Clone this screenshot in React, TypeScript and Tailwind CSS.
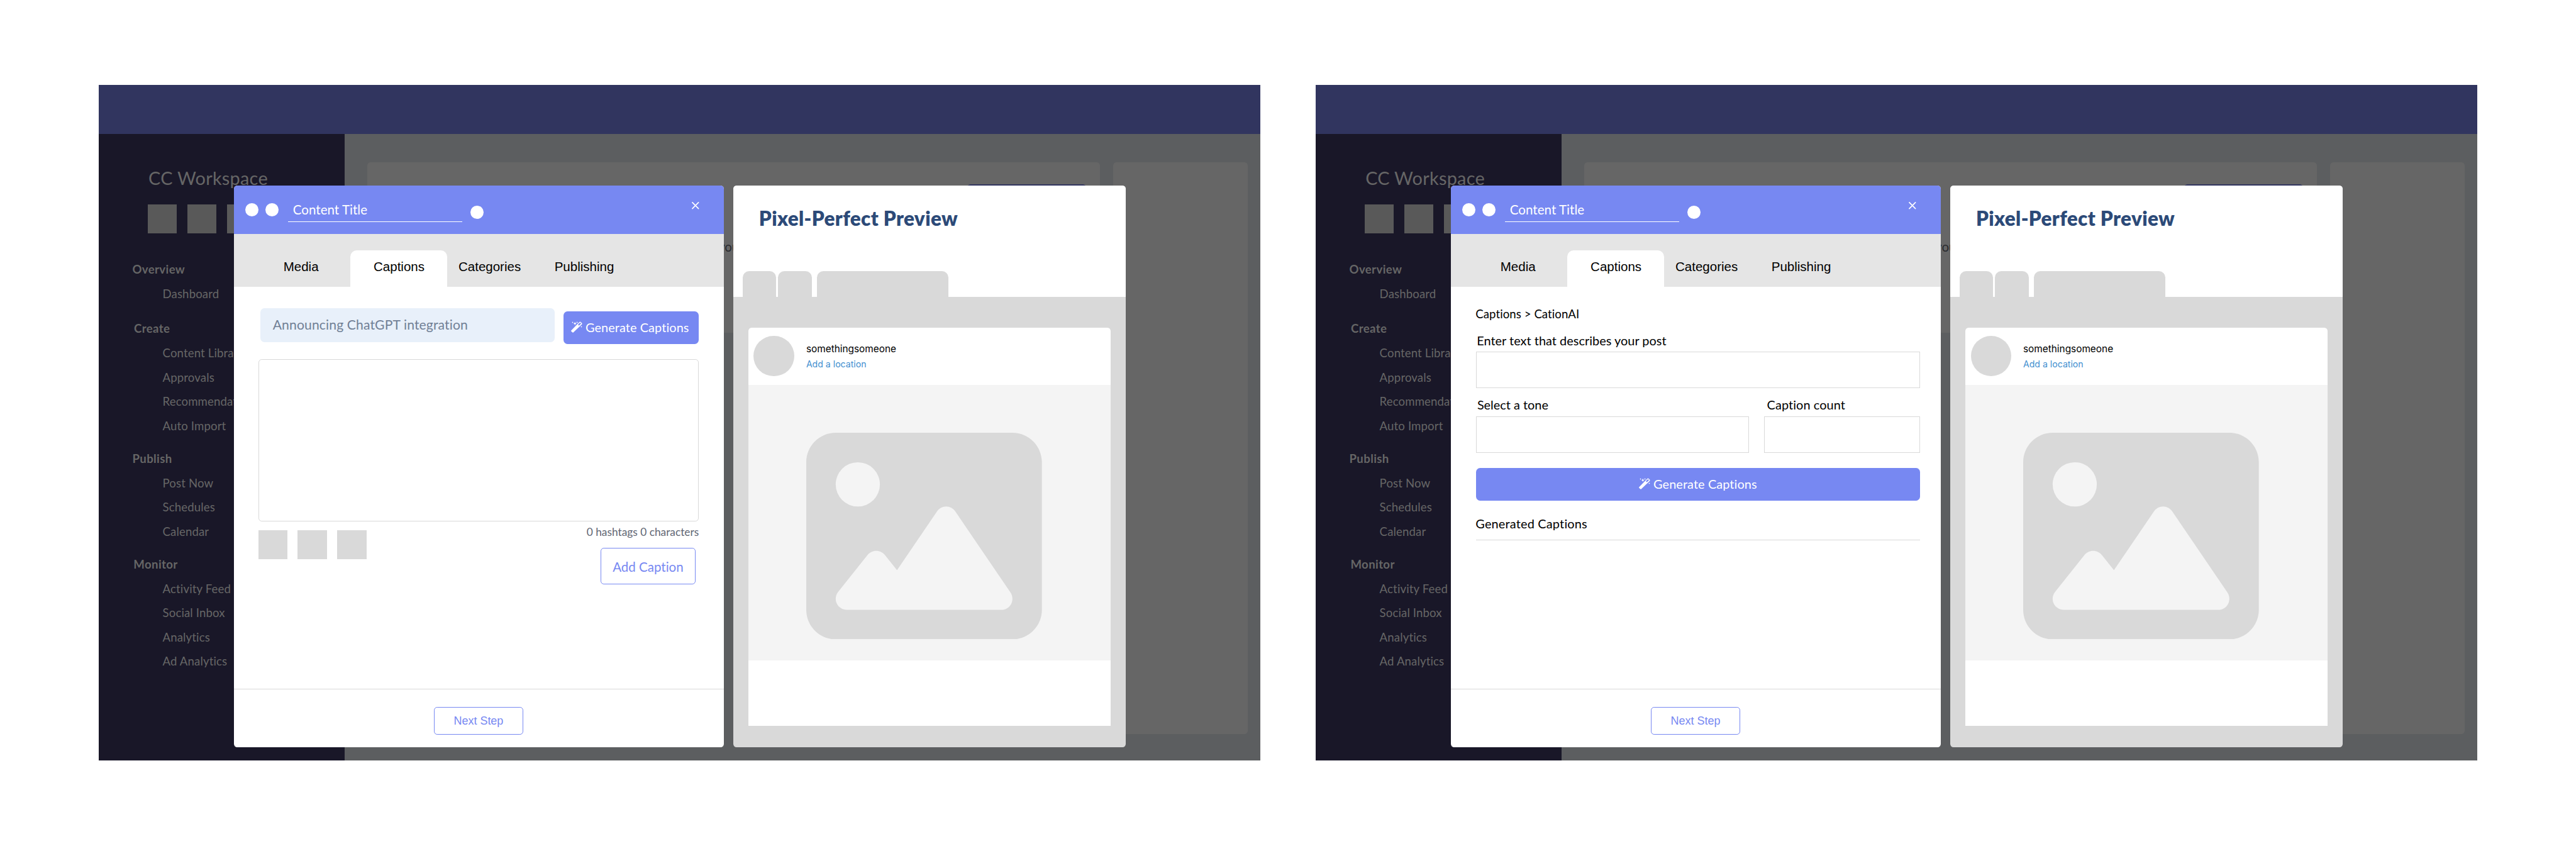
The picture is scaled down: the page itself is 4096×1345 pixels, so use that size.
import type { ReactNode } from "react";

type NavGroup = { title: string; items: string[]; className: string };

const NAV: NavGroup[] = [
  { title: "Overview", items: ["Dashboard"], className: "mt-[69px] pl-[84px]" },
  {
    title: "Create",
    items: ["Content Library", "Approvals", "Recommendations", "Auto Import"],
    className: "mt-[36px] pl-[88px]",
  },
  { title: "Publish", items: ["Post Now", "Schedules", "Calendar"], className: "mt-[32px] pl-[84px]" },
  {
    title: "Monitor",
    items: ["Activity Feed", "Social Inbox", "Analytics", "Ad Analytics"],
    className: "mt-[32px] pl-[87px]",
  },
];

function WandIcon() {
  return (
    <svg viewBox="36 30 84 84" className="h-[28px] w-[28px] shrink-0" fill="currentColor">
      <path
        fillRule="evenodd"
        d="M37 98 98 35Q102 31 107 34L116 42Q120 47 116 52L53 112Q50 114.500 47 112L37.500 104Q35 101 37 98ZM89 52Q87.500 54 89.500 56L93 60Q95 61 97 59L109 48Q111 46 109 43L106 40Q103 38 101 40Z"
      />
      <path d="M65 34Q66.500 44.500 76 46Q66.500 47.500 65 58Q63.500 47.500 54 46Q63.500 44.500 65 34Z" />
      <path d="M48 31.500Q49 36 54 37.500Q49 39 48 43.500Q47 39 42 37.500Q47 36 48 31.500Z" />
      <path d="M81 31.500Q82 36 87 37.500Q82 39 81 43.500Q80 39 75 37.500Q80 36 81 31.500Z" />
      <path d="M113 64Q114 68.500 119 70Q114 71.500 113 76Q112 71.500 107 70Q112 68.500 113 64Z" />
    </svg>
  );
}

function CloseIcon() {
  return (
    <svg viewBox="0 0 18 18" className="h-[18px] w-[18px] shrink-0" fill="none" stroke="currentColor" strokeWidth="2.6" strokeLinecap="round">
      <path d="M1.500 1.500 16.500 16.500M16.500 1.500 1.500 16.500" />
    </svg>
  );
}

function ImageIcon() {
  return (
    <svg viewBox="0 32 512 448" preserveAspectRatio="none" className="h-[512px] w-[584px]" fill="#d9d9d9">
      <path d="M0 96C0 60.700 28.700 32 64 32H448c35.300 0 64 28.700 64 64V416c0 35.300-28.700 64-64 64H64c-35.300 0-64-28.700-64-64V96zM323.800 202.500c-4.500-6.600-11.900-10.500-19.800-10.500s-15.400 3.900-19.800 10.500l-87 127.600L170.700 297c-4.600-5.700-11.500-9-18.700-9s-14.200 3.300-18.700 9l-64 80c-5.800 7.200-6.900 17.100-2.900 25.400s12.400 13.600 21.600 13.600h96 32H424c8.900 0 17.100-4.900 21.200-12.800s3.600-17.400-1.400-24.700l-120-176zM112 192a48 48 0 1 0 0-96 48 48 0 1 0 0 96z" />
    </svg>
  );
}

function Sidebar() {
  return (
    <nav className="w-[610px] shrink-0 bg-[#191728] pt-[79px] text-[#666666]">
      <div className="pl-[124px] text-[45px] leading-[60px] tracking-[0.4px]">CC Workspace</div>
      <div className="mt-[35px] flex gap-[26px] pl-[122px]">
        <div className="size-[72px] bg-[#595959]" />
        <div className="size-[72px] bg-[#595959]" />
        <div className="size-[72px] bg-[#595959]" />
      </div>
      <div className="pt-[2px]">
        {NAV.map((group) => (
          <section key={group.title}>
            <h3 className={`${group.className} text-[29px] leading-[40px] font-bold tracking-[0.6px]`}>{group.title}</h3>
            <ul className="mt-[10px] pl-[159px] text-[29px] leading-[60px] tracking-[0.2px]">
              {group.items.map((item) => (
                <li key={item}>{item}</li>
              ))}
            </ul>
          </section>
        ))}
      </div>
    </nav>
  );
}

function Workspace() {
  return (
    <main className="flex flex-1 items-start gap-[32px] bg-[#5c5e60] pt-[70px] pr-[32px] pl-[56px]">
      <div className="h-[422px] w-[1816px] rounded-[8px] bg-[#666666] pt-[55px]">
        <div className="mr-[35px] ml-auto h-[76px] w-[294px] rounded-[8px] bg-[#31355f]" />
        <div className="mt-[59px] pl-[870px] text-[32px] leading-[40px] text-[#2a2b2f]">you</div>
      </div>
      <div className="h-[1417px] flex-1 rounded-[8px] bg-[#666666]" />
    </main>
  );
}

function EditorHeader() {
  return (
    <header className="flex h-[120px] shrink-0 items-start bg-[#7788f2] pl-[28px] text-white">
      <div className="mt-[44px] size-[32px] rounded-full bg-white" />
      <div className="mt-[44px] ml-[18px] size-[32px] rounded-full bg-white" />
      <div className="mt-[28px] ml-[24px] h-[62px] w-[432px] border-b-2 border-white pl-[12px] text-[32px] leading-[64px] tracking-[0.05px]">
        Content Title
      </div>
      <div className="mt-[50px] ml-[20px] size-[32px] rounded-full bg-white" />
      <div className="mt-[41px] ml-[517px]">
        <CloseIcon />
      </div>
    </header>
  );
}

function EditorTabs() {
  const tab = "flex h-[90px] items-center justify-center pb-[8px]";
  return (
    <div className="flex h-[130px] shrink-0 items-end bg-[#e5e5e5] pl-[44px] font-['Liberation_Sans',sans-serif] text-[32px] leading-none text-black">
      <div className={`${tab} w-[244px]`}>Media</div>
      <div className={`${tab} w-[240px] rounded-t-[16px] bg-white pl-[2px]`}>Captions</div>
      <div className={`${tab} w-[211px]`}>Categories</div>
      <div className={`${tab} w-[258px]`}>Publishing</div>
    </div>
  );
}

function Editor({ children }: { children: ReactNode }) {
  return (
    <div className="flex h-[1392px] w-[1214px] flex-col overflow-hidden rounded-[8px] bg-white">
      <EditorHeader />
      <EditorTabs />
      <div className="flex-1">{children}</div>
      <footer className="flex h-[145px] shrink-0 items-start justify-center border-t-2 border-[#d9d9d9] pt-[44px] pr-[2px]">
        <button className="h-[68px] w-[220px] rounded-[8px] border-2 border-[#7788f2] pt-[2px] font-['Liberation_Sans',sans-serif] text-[28px] leading-none text-[#7788f2]">
          Next Step
        </button>
      </footer>
    </div>
  );
}

function CaptionForm() {
  return (
    <div className="pt-[54px] pr-[62px] pl-[60px]">
      <div className="flex items-start pl-[6px]">
        <div className="flex h-[84px] w-[728px] items-center rounded-[10px] bg-[#e8f0fa] pb-px pl-[30px] text-[33px] leading-none tracking-[0.17px] text-[#718096]">
          Announcing ChatGPT integration
        </div>
        <button className="mt-[8px] ml-[22px] flex h-[80px] w-[336px] items-center gap-[8px] rounded-[10px] bg-[#7788f2] pl-[19px] text-[31px] leading-none tracking-[0.15px] text-white">
          <span className="-mt-[3px]">
            <WandIcon />
          </span>
          Generate Captions
        </button>
      </div>
      <div className="mt-[38px] h-[402px] rounded-[8px] border-2 border-[#d9d9d9]" />
      <div className="flex items-start justify-between">
        <div className="mt-[22px] flex gap-[26px]">
          <div className="size-[72px] bg-[#d9d9d9]" />
          <div className="size-[72px] bg-[#d9d9d9]" />
          <div className="size-[72px] bg-[#d9d9d9]" />
        </div>
        <div className="mt-[6px] flex flex-col items-end">
          <div className="text-[27px] leading-[40px] text-[#5f6673]">0 hashtags 0 characters</div>
          <button className="mt-[20px] mr-[8px] h-[90px] w-[236px] rounded-[8px] border-2 border-[#7788f2] pt-[3px] text-[32px] leading-none text-[#7788f2]">
            Add Caption
          </button>
        </div>
      </div>
    </div>
  );
}

function CaptionGenerator() {
  const label = "text-[31px] leading-[40px]";
  return (
    <div className="pt-[49px] pr-[52px] pl-[62px] text-black">
      <div className="-ml-px text-[29px] leading-[40px] tracking-[0.1px]">Captions &gt; CationAI</div>
      <div className={`${label} mt-[26px] ml-[2px] tracking-[0.05px]`}>Enter text that describes your post</div>
      <div className="mt-[7px] h-[90px] border-2 border-[#d9d9d9]" />
      <div className="mt-[22px] flex gap-[38px]">
        <div className="w-[676px]">
          <div className={`${label} ml-[3px]`}>Select a tone</div>
          <div className="mt-[8px] h-[90px] border-2 border-[#d9d9d9]" />
        </div>
        <div className="flex-1">
          <div className={`${label} ml-[7px] tracking-[0.15px]`}>Caption count</div>
          <div className="mt-[8px] h-[90px] border-2 border-[#d9d9d9]" />
        </div>
      </div>
      <button className="mt-[38px] flex h-[80px] w-full items-center justify-center gap-[8px] rounded-[10px] bg-[#7788f2] text-[31px] leading-none tracking-[0.15px] text-white">
        <span className="-mt-[3px]">
          <WandIcon />
        </span>
        Generate Captions
      </button>
      <div className="mt-[38px] border-b-2 border-[#d9d9d9] pb-[20px]">
        <div className={`${label} -ml-px tracking-[0.3px]`}>Generated Captions</div>
      </div>
    </div>
  );
}

function Preview() {
  return (
    <div className="flex h-[1392px] w-[972px] flex-col overflow-hidden rounded-[8px] bg-[#d9d9d9]">
      <div className="flex h-[276px] shrink-0 flex-col justify-between bg-white pt-[51px]">
        <h2 className="pl-[63px] text-[49px] leading-[60px] font-extrabold tracking-[0.6px] text-[#2c4a78]">Pixel-Perfect Preview</h2>
        <div className="flex pl-[22px]">
          <div className="h-[64px] w-[84px] rounded-t-[16px] bg-[#d9d9d9]" />
          <div className="ml-[4px] h-[64px] w-[84px] rounded-t-[16px] bg-[#d9d9d9]" />
          <div className="ml-[12px] h-[64px] w-[326px] rounded-t-[16px] bg-[#d9d9d9]" />
        </div>
      </div>
      <div className="mt-[76px] ml-[36px] h-[986px] w-[898px] rounded-t-[8px] bg-white">
        <div className="flex h-[142px] items-start pl-[14px] font-['Inter',sans-serif]">
          <div className="mt-[20px] size-[100px] rounded-full bg-[#d9d9d9]" />
          <div className="mt-[34px] ml-[30px]">
            <div className="text-[24px] leading-[38px] text-black">somethingsomeone</div>
            <div className="text-[22px] leading-[38px] text-[#4390d0]">Add a location</div>
          </div>
        </div>
        <div className="h-[682px] bg-[#f4f4f4] pt-[118px] pl-[144px]">
          <ImageIcon />
        </div>
      </div>
    </div>
  );
}

function Frame({ children }: { children: ReactNode }) {
  return (
    <div className="relative flex h-[1674px] w-[2880px] flex-col">
      <div className="h-[122px] shrink-0 bg-[#31355f]" />
      <div className="flex flex-1">
        <Sidebar />
        <Workspace />
      </div>
      <div className="absolute top-[250px] left-[336px] flex gap-[24px]">
        <Editor>{children}</Editor>
        <Preview />
      </div>
    </div>
  );
}

export default function App() {
  return (
    <div className="flex h-[2096px] w-[6384px] items-start gap-[136px] overflow-hidden bg-white pt-[210px] pl-[244px] font-['Lato',sans-serif] whitespace-nowrap [font-variant-ligatures:none] [zoom:0.641604]">
      <Frame>
        <CaptionForm />
      </Frame>
      <Frame>
        <CaptionGenerator />
      </Frame>
    </div>
  );
}
